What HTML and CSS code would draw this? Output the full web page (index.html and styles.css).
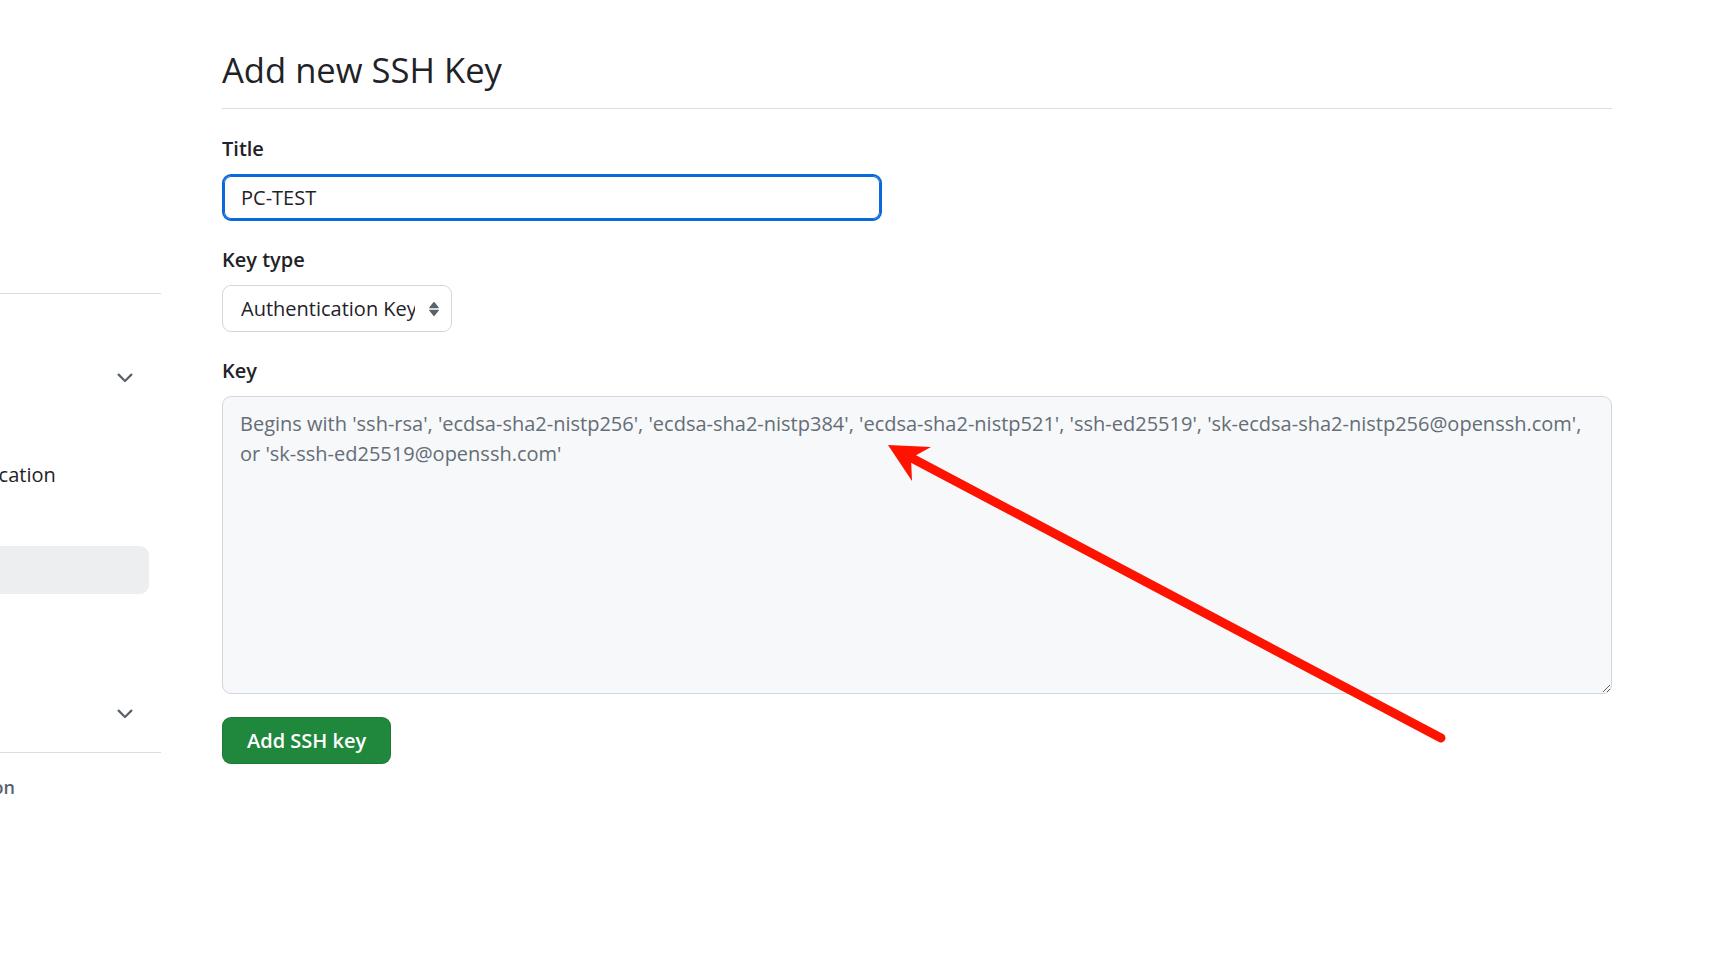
FILE: index.html
```html
<!DOCTYPE html>
<html lang="en">
<head>
<meta charset="utf-8">
<title>Add new SSH Key</title>
<link rel="stylesheet" href="styles.css">
</head>
<body>
<div class="page">
  <aside class="sidebar">
    <div class="side-track">
      <hr class="side-rule">
      <h2 class="side-heading">Access</h2>
      <ul class="side-list">
        <li class="side-item"><span class="label">Billing and plans</span>
          <svg class="chev" viewBox="0 0 16 16"><path fill="currentColor" d="M12.78 5.22a.749.749 0 0 1 0 1.06l-4.25 4.250a.749.749 0 0 1-1.06 0L3.22 6.28a.749.749 0 1 1 1.06-1.06L8 8.939l3.72-3.719a.749.749 0 0 1 1.06 0Z"/></svg></li>
        <li class="side-item"><span class="label">Emails</span></li>
        <li class="side-item"><span class="label">Password and authentication</span></li>
        <li class="side-item"><span class="label">Sessions</span></li>
        <li class="side-item active"><span class="label">SSH and GPG keys</span></li>
        <li class="side-item"><span class="label">Organizations</span></li>
        <li class="side-item"><span class="label">Enterprises</span></li>
        <li class="side-item"><span class="label">Moderation</span>
          <svg class="chev" viewBox="0 0 16 16"><path fill="currentColor" d="M12.78 5.22a.749.749 0 0 1 0 1.06l-4.25 4.25a.749.749 0 0 1-1.06 0L3.22 6.28a.749.749 0 1 1 1.06-1.06L8 8.939l3.72-3.719a.749.749 0 0 1 1.06 0Z"/></svg></li>
      </ul>
      <hr class="side-rule">
      <h2 class="side-heading side-heading-end">Code, planning, and automation</h2>
    </div>
  </aside>

  <main class="main">
    <div class="subhead">
      <h1 class="subhead-heading">Add new SSH Key</h1>
    </div>
    <form class="ssh-form">
      <div class="form-group">
        <label class="form-label" for="title">Title</label>
        <input class="form-input" id="title" type="text" value="PC-TEST">
      </div>
      <div class="form-group">
        <label class="form-label" for="type">Key type</label>
        <div class="select-wrap">
          <select class="form-select" id="type">
            <option>Authentication Key</option>
            <option>Signing Key</option>
          </select>
          <svg class="select-arrow" viewBox="0 0 12 16"><path fill="#59636e" d="M1.2 6.4 5.4 1.3a.8.8 0 0 1 1.2 0l4.2 5.1c.3.4 0 .9-.5.9H1.7c-.5 0-.8-.5-.5-.9Z"/><path fill="#59636e" d="M1.2 9.6l4.2 5.1a.8.8 0 0 0 1.2 0l4.2-5.1c.3-.4 0-.9-.5-.9H1.7c-.5 0-.8.5-.5.9Z"/></svg>
        </div>
      </div>
      <div class="form-group">
        <label class="form-label" for="key">Key</label>
        <textarea class="form-textarea" id="key" placeholder="Begins with 'ssh-rsa', 'ecdsa-sha2-nistp256', 'ecdsa-sha2-nistp384', 'ecdsa-sha2-nistp521', 'ssh-ed25519', 'sk-ecdsa-sha2-nistp256@openssh.com', or 'sk-ssh-ed25519@openssh.com'"></textarea>
      </div>
      <button class="btn-primary" type="button">Add SSH key</button>
    </form>
  </main>

  <svg class="annotation" viewBox="0 0 1715 968" width="1715" height="968">
    <line x1="1441" y1="738" x2="906" y2="455" stroke="#fe1200" stroke-width="9" stroke-linecap="round"/>
    <polygon points="888,445 931,447 911,458 912,481" fill="#fe1200"/>
  </svg>
</div>
</body>
</html>
```

FILE: styles.css
```css
* {
  box-sizing: border-box;
}

body {
  margin: 0;
  background: #ffffff;
  color: #1f2328;
  font-family: "Open Sans", "Noto Sans", sans-serif;
}

.page {
  position: relative;
  display: flex;
  gap: 61px;
  min-height: 968px;
  overflow: hidden;
}

/* ---------- Sidebar (scrolled partly out of view) ---------- */
.sidebar {
  width: 161px;
  flex: none;
  overflow: hidden;
  display: flex;
  flex-direction: column;
  align-items: flex-end;
  padding-top: 293px;
}

.side-track {
  width: 520px;
  flex: none;
}

.side-rule {
  margin: 0;
  height: 0;
  border: 0;
  border-top: 1px solid #d8dee4;
}

.side-heading {
  margin: 21px 0 12px;
  padding-left: 120px;
  font-size: 18px;
  line-height: 27px;
  font-weight: 600;
  color: #59636e;
  white-space: nowrap;
}

.side-heading-end {
  display: flex;
  justify-content: flex-end;
  padding-left: 0;
  padding-right: 146px;
}

.side-list {
  list-style: none;
  margin: 0 12px 14px 0;
  padding: 0;
}

.side-item {
  display: flex;
  align-items: center;
  height: 48px;
  padding: 0 12px 0 143px;
  border-radius: 9px;
  font-size: 20px;
  color: #1f2328;
  white-space: nowrap;
}

.side-item.active {
  background: #eceef0;
}

.side-item .label {
  flex: 1;
}

.chev {
  width: 24px;
  height: 24px;
  flex: none;
  color: #59636e;
}

/* ---------- Main ---------- */
.main {
  width: 1390px;
  flex: none;
  padding-top: 44px;
}

.subhead {
  padding-bottom: 12px;
  margin-bottom: 25px;
  border-bottom: 1px solid #d8dee4;
}

.subhead-heading {
  margin: 0;
  font-size: 34.6px;
  line-height: 52px;
  font-weight: 400;
  color: #1f2328;
}

.form-group + .form-group {
  margin-top: 24px;
}

.form-label {
  display: block;
  margin-bottom: 10px;
  font-size: 20px;
  line-height: 30px;
  font-weight: 600;
  color: #1f2328;
}

.form-input {
  display: block;
  width: 660px;
  height: 47px;
  padding: 0 17px;
  border: 2px solid #0969da;
  border-radius: 9px;
  box-shadow: inset 0 0 0 1px #0969da;
  outline: none;
  background: #ffffff;
  font-family: inherit;
  font-size: 20px;
  color: #1f2328;
}

.select-wrap {
  position: relative;
  display: inline-block;
  vertical-align: top;
}

.form-select {
  display: block;
  width: 230px;
  height: 47px;
  padding: 0 36px 0 18px;
  border: 1px solid #d0d7de;
  border-radius: 9px;
  background: #ffffff;
  appearance: none;
  -webkit-appearance: none;
  font-family: inherit;
  font-size: 20px;
  color: #1f2328;
}

.select-arrow {
  position: absolute;
  left: 206px;
  top: 16px;
  width: 12px;
  height: 16px;
  pointer-events: none;
}

.form-textarea {
  display: block;
  width: 1390px;
  height: 298px;
  padding: 12px 17px;
  border: 1px solid #d0d7de;
  border-radius: 9px;
  background: #f6f8fa;
  resize: vertical;
  font-family: inherit;
  font-size: 20px;
  line-height: 30px;
  color: #1f2328;
}

.form-textarea::placeholder {
  color: #656d76;
  opacity: 1;
}

.btn-primary {
  display: block;
  margin-top: 23px;
  height: 47px;
  padding: 0 24px;
  border: 1px solid rgba(31, 35, 40, 0.15);
  border-radius: 9px;
  background: #1f883d;
  color: #ffffff;
  font-family: inherit;
  font-size: 20px;
  font-weight: 600;
}

/* ---------- Annotation overlay ---------- */
.annotation {
  position: absolute;
  left: 0;
  top: 0;
  pointer-events: none;
}
```
